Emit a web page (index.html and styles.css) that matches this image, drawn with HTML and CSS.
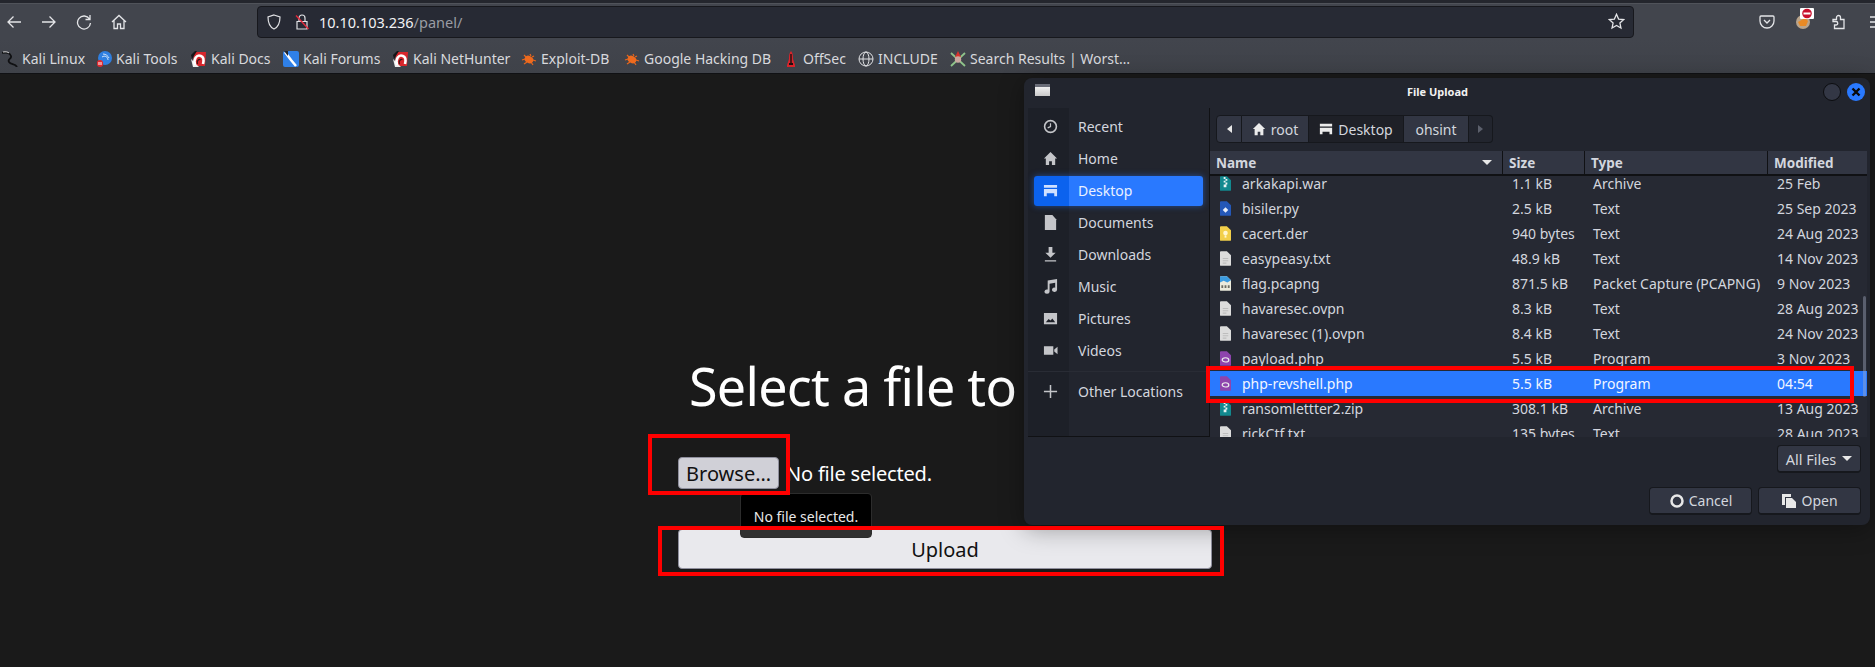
FILE: index.html
```html
<!DOCTYPE html>
<html lang="en">
<head>
    <meta charset="UTF-8">
    <meta name="viewport" content="width=device-width, initial-scale=1.0">
    <title>File Upload</title>
    <link rel="stylesheet" href="styles.css">
</head>
<body>
    <!-- shared icons -->
    <svg class="sprite" aria-hidden="true">
        <symbol id="magnet" viewBox="0 0 16 16">
            <path d="M3 1h12l-1 14H2z" fill="#d8262c"/>
            <path d="M0 4 4 0h2L1 8z" fill="#15161a"/>
            <path d="M0 8 2 16h6z" fill="#eee"/>
            <path d="M4 14C2 8 6 3 10 5c3 1 3 4 2 8" fill="none" stroke="#fff" stroke-width="2.600"/>
            <path d="M6.500 13c-1-3 1-5 3-4.500" fill="none" stroke="#3a1a1c" stroke-width="1.200"/>
        </symbol>
        <symbol id="bug" viewBox="0 0 16 16">
            <path d="M3 4l2 2M1 9l3-1M3 13l3-2M9 3l1 2M13 5l-2 1M15 10l-3-1M12 14l-2-3" stroke="#e8661c" stroke-width="1.200"/>
            <ellipse cx="8" cy="8.500" rx="4.500" ry="3.600" fill="#ee6a1e" transform="rotate(30 8 8.500)"/>
        </symbol>
        <symbol id="text-file" viewBox="0 0 12 16">
            <path d="M1 0h6.500L12 4.500V15a1 1 0 0 1-1 1H1a1 1 0 0 1-1-1V1a1 1 0 0 1 1-1z" fill="#dcdcdc"/>
            <path d="M3 8h6M3 10.500h6M3 13h4" stroke="#bdbdbd" stroke-width="1.200"/>
        </symbol>
        <symbol id="php-file" viewBox="0 0 12 16">
            <path d="M1 0h6.500L12 4.500V15a1 1 0 0 1-1 1H1a1 1 0 0 1-1-1V1a1 1 0 0 1 1-1z" fill="#8e44ad"/>
            <ellipse cx="6" cy="9.500" rx="3.600" ry="2.300" fill="none" stroke="#eee" stroke-width="1.300"/>
        </symbol>
        <symbol id="zip-file" viewBox="0 0 12 16">
            <path d="M1 0h6.500L12 4.500V15a1 1 0 0 1-1 1H1a1 1 0 0 1-1-1V1a1 1 0 0 1 1-1z" fill="#12898f"/>
            <path d="M4 1h2v2H4zM6 3h2v2H6zM4 5h2v2H4zM6 7h2v2H6zM4 9h3v3H4z" fill="#e8f4f4"/>
        </symbol>
        <symbol id="py-file" viewBox="0 0 12 16">
            <path d="M1 0h6.500L12 4.500V15a1 1 0 0 1-1 1H1a1 1 0 0 1-1-1V1a1 1 0 0 1 1-1z" fill="#2458b8"/>
            <path d="M6 6.500 9 9.500 6 12.500 3 9.500z" fill="#e8eefa"/>
        </symbol>
        <symbol id="cert-file" viewBox="0 0 12 16">
            <path d="M1 0h6.500L12 4.500V15a1 1 0 0 1-1 1H1a1 1 0 0 1-1-1V1a1 1 0 0 1 1-1z" fill="#f2cf4a"/>
            <circle cx="6" cy="7.500" r="2.500" fill="#fff6cf"/>
            <path d="M5 10h2v2.500H5z" fill="#fff6cf"/>
        </symbol>
        <symbol id="pcap-file" viewBox="0 0 12 16">
            <path d="M1 0h6.500L12 4.500V15a1 1 0 0 1-1 1H1a1 1 0 0 1-1-1V1a1 1 0 0 1 1-1z" fill="#ecebdc"/>
            <path d="M0 1a1 1 0 0 1 1-1h6.500L12 4.500 8 7 4 5 0 7z" fill="#3b9be0"/>
            <path d="M1.500 10h2v3h-2zM5 10h2v3H5zM8.500 10h2v3h-2z" fill="#6d6d62"/>
        </symbol>
    </svg>

    <header class="browser">
        <div class="toolbar">
            <div class="nav-buttons">
                <svg class="tool-icon" viewBox="0 0 16 16"><path d="M15 8H2M7.500 2.500 2 8l5.500 5.500"/></svg>
                <svg class="tool-icon" viewBox="0 0 16 16"><path d="M1 8h13M8.500 2.500 14 8l-5.500 5.500"/></svg>
                <svg class="tool-icon" viewBox="0 0 16 16"><path d="M13.500 5A6.500 6.500 0 1 0 14.500 9M14 1v4.500H9.500"/></svg>
                <svg class="tool-icon" viewBox="0 0 16 16"><path d="M1 8l7-6.500L15 8M3 6.500V14.500h3.500V10h3v4.500H13V6.500"/></svg>
            </div>
            <div class="urlbar">
                <svg class="url-icon" viewBox="0 0 16 16"><path d="M8 1l6 2c0 6-1.500 10-6 12C3.500 13 2 9 2 3z"/></svg>
                <svg class="url-icon lock" viewBox="0 0 16 16"><path d="M3 7.500h10V15H3zM5 7.500V4a3 3 0 0 1 6 0v3.500"/><path class="slash" d="M2 1.500 14.500 15"/></svg>
                <span class="url-text">10.10.103.236<span class="url-path">/panel/</span></span>
                <svg class="star" viewBox="0 0 16 16"><path d="M8 1.200l2 4.500 4.800.5-3.600 3.200 1 4.800L8 11.800l-4.200 2.400 1-4.800L1.200 6.200 6 5.700z"/></svg>
            </div>
            <div class="addons">
                <svg class="tool-icon" viewBox="0 0 16 16"><path d="M2 2h12a1 1 0 0 1 1 1v4a7 7 0 0 1-14 0V3a1 1 0 0 1 1-1zM5 6l3 3 3-3"/></svg>
                <div class="fox">
                    <svg viewBox="0 0 16 16"><circle cx="8" cy="8" r="7" fill="#b9a48c"/><path d="M3 8l7-4 3 3-2 5-6 0z" fill="#e98a25"/></svg>
                    <svg class="blocked" viewBox="0 0 14 11"><rect width="14" height="11" rx="1" fill="#fff"/><circle cx="7" cy="5.500" r="4.800" fill="#c8102e"/><rect x="3.500" y="4.500" width="7" height="2" fill="#fff"/></svg>
                </div>
                <svg class="tool-icon" viewBox="0 0 16 16"><path d="M2 5.500h3.500V3.500a2 2 0 0 1 4 0v2H13v9H3.500v-3.500h1.500a1.700 1.700 0 0 0 0-3.500H2z"/></svg>
                <svg class="tool-icon burger" viewBox="0 0 16 16"><path d="M1 3h14M1 8h14M1 13h14"/></svg>
            </div>
        </div>
        <nav class="bookmarks">
            <a class="bookmark first">
                <svg class="favicon" viewBox="0 0 16 16"><path d="M0 2c4-1 8 0 9 3s-4 3-2 6 6 1 8 5" fill="none" stroke="#0f1012" stroke-width="1.800"/><path d="M1 1c3-.5 5 0 6 1" fill="none" stroke="#d8d8d8"/></svg>
                Kali Linux
            </a>
            <a class="bookmark tools">
                <svg class="favicon" viewBox="0 0 16 16"><circle cx="9" cy="7" r="7" fill="#2f7fe0"/><path d="M6 6c3-2 6 0 6 3M7 3c3 0 5 2 6 4" fill="none" stroke="#cfe4fb"/><rect x="1" y="9" width="6" height="7" rx="3" fill="#e0282e"/><path d="M3 11v3M5 11v3" stroke="#fff"/></svg>
                Kali Tools
            </a>
            <a class="bookmark docs"><svg class="favicon"><use href="#magnet"/></svg>Kali Docs</a>
            <a class="bookmark forums">
                <svg class="favicon" viewBox="0 0 16 16"><rect width="16" height="16" rx="2" fill="#2f80e8"/><path d="M2 1l6 8 5 6" fill="none" stroke="#fff" stroke-width="2.500"/><path d="M1 0h4v5z" fill="#20242c"/></svg>
                Kali Forums
            </a>
            <a class="bookmark hunter"><svg class="favicon"><use href="#magnet"/></svg>Kali NetHunter</a>
            <a class="bookmark exploit"><svg class="favicon"><use href="#bug"/></svg>Exploit-DB</a>
            <a class="bookmark google"><svg class="favicon"><use href="#bug"/></svg>Google Hacking DB</a>
            <a class="bookmark offsec">
                <svg class="favicon" viewBox="0 0 16 16"><path d="M8 0c2 2 2 5 2 8l2 6v2H4v-2l2-6c0-3 0-6 2-8z" fill="#d9232b"/><path d="M7.300 3h1.400v9H10v2H6v-2h1.300z" fill="#1d1010"/></svg>
                OffSec
            </a>
            <a class="bookmark include">
                <svg class="favicon globe" viewBox="0 0 16 16"><circle cx="8" cy="8" r="7"/><ellipse cx="8" cy="8" rx="3" ry="7"/><path d="M1 8h14"/></svg>
                INCLUDE
            </a>
            <a class="bookmark worst">
                <svg class="favicon" viewBox="0 0 16 16"><path d="M1 2l14 13M15 2 1 15" stroke="#8fc48a" stroke-width="1.800"/><path d="M8 0l3 6H5z" fill="#d8322c"/><circle cx="8" cy="8.500" r="3.200" fill="#c8a8a0"/></svg>
                Search Results | Worst…
            </a>
        </nav>
    </header>

    <main class="panel">
        <h1>Select a file to</h1>
        <div class="file-input">
            <button class="browse">Browse…</button>
            <span>No file selected.</span>
        </div>
        <button class="upload">Upload</button>
    </main>

    <div class="tooltip">No file selected.</div>
    <div class="mark mark-browse"></div>
    <div class="mark mark-upload"></div>

    <section class="dialog">
        <div class="titlebar">
            <span class="window-icon"></span>
            <span class="dialog-title">File Upload</span>
            <span class="win-btn"></span>
            <span class="win-btn close">
                <svg viewBox="0 0 10 10"><path d="M1.500 1.500l7 7M8.500 1.500l-7 7"/></svg>
            </span>
        </div>
        <div class="dialog-body">
            <aside class="sidebar">
                <div class="place">
                    <svg viewBox="0 0 16 16"><circle cx="8" cy="8" r="6.300" fill="none" stroke="currentColor" stroke-width="1.700"/><path d="M8 4.500V8l-3 1.500" fill="none" stroke="currentColor" stroke-width="1.300"/></svg>
                    Recent
                </div>
                <div class="place">
                    <svg viewBox="0 0 16 16"><path d="M8 1 1 8h2v7h3.500v-4h3v4H13V8h2z" fill="currentColor"/></svg>
                    Home
                </div>
                <div class="place selected">
                    <svg viewBox="0 0 16 16"><path d="M1 2h14v3H1zM1 6.500h14V14h-3v-3H4v3H1z" fill="currentColor"/></svg>
                    Desktop
                </div>
                <div class="place">
                    <svg viewBox="0 0 16 16"><path d="M2 0h8l4 4.500V16H2z" fill="currentColor"/></svg>
                    Documents
                </div>
                <div class="place">
                    <svg viewBox="0 0 16 16"><path d="M6 0h4v6h3.500L8 11.500 2.500 6H6zM2 14h12v1.500H2z" fill="currentColor"/></svg>
                    Downloads
                </div>
                <div class="place">
                    <svg viewBox="0 0 16 16"><path d="M5 1.500 15 0v11.500a2.700 2.300 0 1 1-2-2.200V4L7 5v8.500a2.700 2.300 0 1 1-2-2.200z" fill="currentColor"/></svg>
                    Music
                </div>
                <div class="place">
                    <svg viewBox="0 0 16 16"><path d="M1 2h14v12H1zM3 12h10l-3-4-2 2-2-1.500z" fill="currentColor" fill-rule="evenodd"/></svg>
                    Pictures
                </div>
                <div class="place">
                    <svg viewBox="0 0 16 16"><path d="M1 3.500h10v9H1zM12 7l3.500-3v8L12 9z" fill="currentColor"/></svg>
                    Videos
                </div>
                <div class="separator"></div>
                <div class="place">
                    <svg viewBox="0 0 16 16"><path d="M8 1v14M1 8h14" stroke="currentColor" stroke-width="1.600"/></svg>
                    Other Locations
                </div>
            </aside>
            <div class="files">
                <div class="pathbar">
                    <span class="crumb arrow"><i class="tri-left"></i></span>
                    <span class="crumb root">
                        <svg viewBox="0 0 16 16"><path d="M8 1 1 8h2v7h3.500v-4h3v4H13V8h2z" fill="currentColor"/></svg>
                        root
                    </span>
                    <span class="crumb current">
                        <svg viewBox="0 0 16 16"><path d="M1 2h14v3H1zM1 6.500h14V14h-3v-3H4v3H1z" fill="currentColor"/></svg>
                        Desktop
                    </span>
                    <span class="crumb ohsint">ohsint</span>
                    <span class="crumb arrow off"><i class="tri-right"></i></span>
                </div>
                <div class="row head">
                    <span class="sort">Name<i class="tri-down"></i></span>
                    <span>Size</span>
                    <span>Type</span>
                    <span>Modified</span>
                </div>
                <div class="list">
                    <div class="row"><span><svg class="file-icon"><use href="#zip-file"/></svg>arkakapi.war</span><span>1.1 kB</span><span>Archive</span><span>25 Feb</span></div>
                    <div class="row"><span><svg class="file-icon"><use href="#py-file"/></svg>bisiler.py</span><span>2.5 kB</span><span>Text</span><span>25 Sep 2023</span></div>
                    <div class="row"><span><svg class="file-icon"><use href="#cert-file"/></svg>cacert.der</span><span>940 bytes</span><span>Text</span><span>24 Aug 2023</span></div>
                    <div class="row"><span><svg class="file-icon"><use href="#text-file"/></svg>easypeasy.txt</span><span>48.9 kB</span><span>Text</span><span>14 Nov 2023</span></div>
                    <div class="row"><span><svg class="file-icon"><use href="#pcap-file"/></svg>flag.pcapng</span><span>871.5 kB</span><span>Packet Capture (PCAPNG)</span><span>9 Nov 2023</span></div>
                    <div class="row"><span><svg class="file-icon"><use href="#text-file"/></svg>havaresec.ovpn</span><span>8.3 kB</span><span>Text</span><span>28 Aug 2023</span></div>
                    <div class="row"><span><svg class="file-icon"><use href="#text-file"/></svg>havaresec (1).ovpn</span><span>8.4 kB</span><span>Text</span><span>24 Nov 2023</span></div>
                    <div class="row"><span><svg class="file-icon"><use href="#php-file"/></svg>payload.php</span><span>5.5 kB</span><span>Program</span><span>3 Nov 2023</span></div>
                    <div class="row active"><span><svg class="file-icon"><use href="#php-file"/></svg>php-revshell.php</span><span>5.5 kB</span><span>Program</span><span>04:54</span></div>
                    <div class="row"><span><svg class="file-icon"><use href="#zip-file"/></svg>ransomlettter2.zip</span><span>308.1 kB</span><span>Archive</span><span>13 Aug 2023</span></div>
                    <div class="row"><span><svg class="file-icon"><use href="#text-file"/></svg>rickCtf.txt</span><span>135 bytes</span><span>Text</span><span>28 Aug 2023</span></div>
                    <div class="scroll-thumb"></div>
                </div>
                <div class="mark mark-row"></div>
            </div>
        </div>
        <div class="dialog-foot">
            <button class="gtk-btn filter">All Files<i class="tri-down"></i></button>
            <div class="foot-actions">
                <button class="gtk-btn">
                    <svg viewBox="0 0 16 16"><circle cx="8" cy="8" r="5.500" fill="none" stroke="currentColor" stroke-width="2.500"/></svg>
                    Cancel
                </button>
                <button class="gtk-btn">
                    <svg viewBox="0 0 16 16"><path d="M1 1h9v3H4v8H1z" fill="currentColor"/><path d="M5 5h6l4 4v6H5z" fill="currentColor"/></svg>
                    Open
                </button>
            </div>
        </div>
    </section>
</body>
</html>
```

FILE: styles.css
```css
* {
    box-sizing: border-box;
}

body {
    margin: 0;
    height: 667px;
    overflow: hidden;
    position: relative;
    background-color: #1a1a1a;
    font-family: "Noto Sans", sans-serif;
    color: #fff;
}

.sprite {
    display: none;
}

/* browser chrome */
.browser {
    height: 74px;
    padding-top: 3px;
    background-color: #24262d;
}

.toolbar {
    display: flex;
    align-items: center;
    height: 36px;
    padding: 1px 0 0 6px;
    background: #42454d;
    border-top: 1px solid #50535a;
}

.nav-buttons {
    display: flex;
    gap: 19px;
    width: 251px;
    flex: none;
}

.tool-icon {
    width: 16px;
    height: 16px;
    fill: none;
    stroke: #e4e5e8;
    stroke-width: 1.300;
    flex: none;
}

.urlbar {
    display: flex;
    align-items: center;
    flex: none;
    width: 1377px;
    height: 32px;
    margin-top: -1px;
    padding: 0 8px 0 8px;
    background-color: #272a34;
    border: 1px solid #17181d;
    border-radius: 4px;
}

.url-icon {
    width: 16px;
    height: 16px;
    fill: none;
    stroke: #e0e1e4;
    stroke-width: 1.200;
    margin-right: 12px;
}

.url-icon .slash {
    stroke: #e5283a;
    stroke-width: 1.400;
}

.url-icon.lock {
    margin-right: 9px;
}

.url-text {
    flex: 1;
    font-size: 14.500px;
    color: #f2f2f4;
}

.url-path {
    color: #9a9ca3;
}

.star {
    width: 17px;
    height: 17px;
    fill: none;
    stroke: #e4e5e8;
    stroke-width: 1.200;
}

.addons {
    display: flex;
    align-items: center;
    flex: none;
    gap: 20px;
    padding-left: 125px;
}

.fox {
    position: relative;
    width: 16px;
    height: 16px;
    flex: none;
}

.fox svg {
    display: block;
}

.fox .blocked {
    position: absolute;
    left: 5px;
    top: -6px;
    width: 14px;
    height: 11px;
}

.burger {
    margin-left: 2px;
}

.bookmarks {
    display: flex;
    align-items: center;
    height: 35px;
    padding-top: 5px;
    background: linear-gradient(#42454d, #3f4249);
    font-size: 14px;
    color: #d8d9dd;
    border-bottom: 1px solid #101114;
}

.bookmark {
    display: flex;
    align-items: center;
    gap: 4px;
    white-space: nowrap;
    flex: none;
}

.favicon {
    width: 16px;
    height: 16px;
    flex: none;
}

.globe {
    fill: none;
    stroke: #e0e1e4;
    stroke-width: 1;
}

.first { margin-left: 2px; width: 94px; }
.tools { width: 95px; }
.docs { width: 92px; }
.forums { width: 110px; }
.hunter { width: 128px; }
.exploit { width: 103px; }
.google { width: 159px; }
.offsec { width: 75px; }
.include { width: 92px; }

/* page content */
.panel {
    width: 534px;
    margin-left: 678px;
    padding-top: 276px;
}

.panel h1 {
    margin: 0 0 0 11px;
    font-size: 52px;
    font-weight: 400;
    letter-spacing: -0.7px;
    line-height: 72px;
    white-space: nowrap;
}

.file-input {
    display: flex;
    align-items: center;
    gap: 7px;
    height: 32px;
    margin-top: 35px;
    font-size: 20px;
    letter-spacing: -0.2px;
}

.browse {
    width: 101px;
    height: 32px;
    padding: 0;
    font-family: inherit;
    font-size: 20px;
    color: #111;
    background-color: #d0d0d7;
    border: 1px solid #8f8f9d;
    border-radius: 4px;
}

.upload {
    display: block;
    width: 534px;
    height: 40px;
    margin-top: 40px;
    padding: 0;
    font-family: inherit;
    font-size: 20px;
    color: #111;
    background-color: #e9e9ed;
    border: 1px solid #8f8f9d;
    border-radius: 4px;
}

.tooltip {
    position: absolute;
    left: 740px;
    top: 493px;
    width: 132px;
    height: 45px;
    padding-top: 13px;
    text-align: center;
    font-size: 14px;
    color: #e8e8e8;
    background: linear-gradient(#000 36px, #303030 36px);
    border: 1px solid #2c2c2c;
    border-radius: 4px;
}

.mark {
    position: absolute;
    border: 4px solid #f00;
    z-index: 3;
    pointer-events: none;
}

.mark-browse {
    left: 648px;
    top: 434px;
    width: 142px;
    height: 61px;
}

.mark-upload {
    left: 658px;
    top: 526px;
    width: 566px;
    height: 50px;
}

/* gtk file dialog */
.dialog {
    position: absolute;
    left: 1024px;
    top: 78px;
    width: 846px;
    height: 447px;
    padding: 0 3px 0 4px;
    background-color: #22252e;
    border-radius: 8px;
    box-shadow: 0 4px 24px rgba(0, 0, 0, 0.35);
    font-size: 14px;
    color: #d3d6de;
}

.titlebar {
    position: relative;
    display: flex;
    align-items: center;
    justify-content: center;
    height: 30px;
    padding: 0 20px 3px 0;
}

.window-icon {
    position: absolute;
    left: 7px;
    top: 6px;
    width: 15px;
    height: 12px;
    background: linear-gradient(#6a6d78 3px, #f0f0f0 3px, #c9c9c9);
}

.dialog-title {
    font-size: 11px;
    font-weight: 700;
    color: #f2f2f2;
}

.win-btn {
    position: absolute;
    right: 26px;
    top: 5px;
    width: 18px;
    height: 18px;
    background-color: #333745;
    border: 1px solid #0c0d10;
    border-radius: 50%;
}

.win-btn.close {
    right: 2px;
    display: flex;
    align-items: center;
    justify-content: center;
    background-color: #2979ff;
    border: none;
}

.win-btn svg {
    width: 10px;
    height: 10px;
    fill: none;
    stroke: #0a0a0a;
    stroke-width: 2.400;
}

.dialog-body {
    display: flex;
    height: 329px;
    border-bottom: 1px solid #101114;
}

.sidebar {
    width: 182px;
    flex: none;
    padding-top: 3px;
    background: linear-gradient(90deg, #1d2028 41px, #22252e 41px);
    border-right: 1px solid #101114;
}

.place {
    display: flex;
    align-items: center;
    height: 32px;
    margin: 0 6px;
    padding: 0 0 2px 2px;
    gap: 20px;
    border-radius: 3px;
}

.place svg {
    width: 15px;
    height: 15px;
    margin-left: 7px;
    flex: none;
    color: #c4c5c9;
}

.place.selected {
    height: 30px;
    margin: 1px 6px;
    color: #eaf1ff;
    background: linear-gradient(90deg, #0b62ee 35px, #2979ff 35px);
    box-shadow: 0 0 6px rgba(41, 121, 255, 0.5);
}

.place.selected svg {
    color: #cfe0ff;
}

.separator {
    height: 1px;
    margin: 4px 0;
    background-color: #292c35;
}

.files {
    position: relative;
    flex: 1;
    min-width: 0;
}

.pathbar {
    display: flex;
    height: 28px;
    margin: 7px 0 8px 6px;
}

.crumb {
    display: flex;
    align-items: center;
    justify-content: center;
    gap: 5px;
    height: 28px;
    background-color: #323643;
    border: 1px solid #16181d;
    border-left: none;
    color: #d3d6de;
}

.crumb svg {
    width: 14px;
    height: 14px;
    color: #ececec;
}

.crumb.arrow {
    width: 26px;
    border-left: 1px solid #16181d;
    border-radius: 4px 0 0 4px;
}

.crumb.off {
    width: 24px;
    background-color: #22252e;
    border-left: none;
    border-radius: 0 4px 4px 0;
}

.root { width: 67px; }
.current { width: 95px; background-color: #1e2027; }
.ohsint { width: 65px; }

.tri-left {
    border: 4px solid transparent;
    border-left: none;
    border-right: 5px solid #e8e8e8;
}

.tri-right {
    border: 4px solid transparent;
    border-right: none;
    border-left: 5px solid #5c606c;
}

.tri-down {
    display: inline-block;
    border: 5px solid transparent;
    border-bottom: none;
    border-top: 5px solid #e8e8e8;
}

.row {
    display: grid;
    grid-template-columns: 293px 82px 183px 99px;
    align-items: center;
    height: 25px;
    white-space: nowrap;
}

.row > span {
    display: flex;
    align-items: center;
    padding-left: 9px;
    min-width: 0;
}

.row > span:nth-child(3) {
    padding-left: 8px;
}

.row.head {
    height: 25px;
    font-weight: 700;
    font-size: 13.500px;
    background-color: #323643;
    border-bottom: 2px solid #101114;
}

.row.head > span {
    height: 23px;
    padding-left: 6px;
    border-right: 1px solid #101114;
}

.row.head > span:last-child {
    border-right: none;
}

.sort {
    justify-content: space-between;
    padding-right: 10px;
}

.list {
    position: relative;
    height: 261px;
    overflow: hidden;
    background-color: #262933;
}

.list .row:first-child {
    margin-top: -5px;
}

.row.active {
    color: #f2f6ff;
    background-color: #2979ff;
}

.file-icon {
    width: 11px;
    height: 15px;
    margin: 0 11px 0 1px;
    flex: none;
}

.scroll-thumb {
    position: absolute;
    right: 1px;
    top: 120px;
    width: 3px;
    height: 101px;
    background-color: rgba(170, 178, 200, 0.4);
    border-radius: 2px;
}

.mark-row {
    left: -4px;
    top: 258px;
    width: 648px;
    height: 37px;
}

.dialog-foot {
    display: flex;
    flex-direction: column;
    align-items: flex-end;
    gap: 14px;
    padding: 8px 6px 0 0;
}

.foot-actions {
    display: flex;
    gap: 6px;
}

.gtk-btn {
    display: flex;
    align-items: center;
    justify-content: center;
    gap: 4px;
    height: 28px;
    width: 103px;
    padding: 0;
    font-family: inherit;
    font-size: 14px;
    color: #d3d6de;
    background-color: #323643;
    border: 1px solid #16181d;
    border-bottom-width: 2px;
    border-radius: 4px;
}

.gtk-btn svg {
    width: 16px;
    height: 16px;
    color: #e8e8e8;
}

.gtk-btn.filter {
    width: 84px;
    gap: 6px;
    font-size: 14.500px;
}
```
